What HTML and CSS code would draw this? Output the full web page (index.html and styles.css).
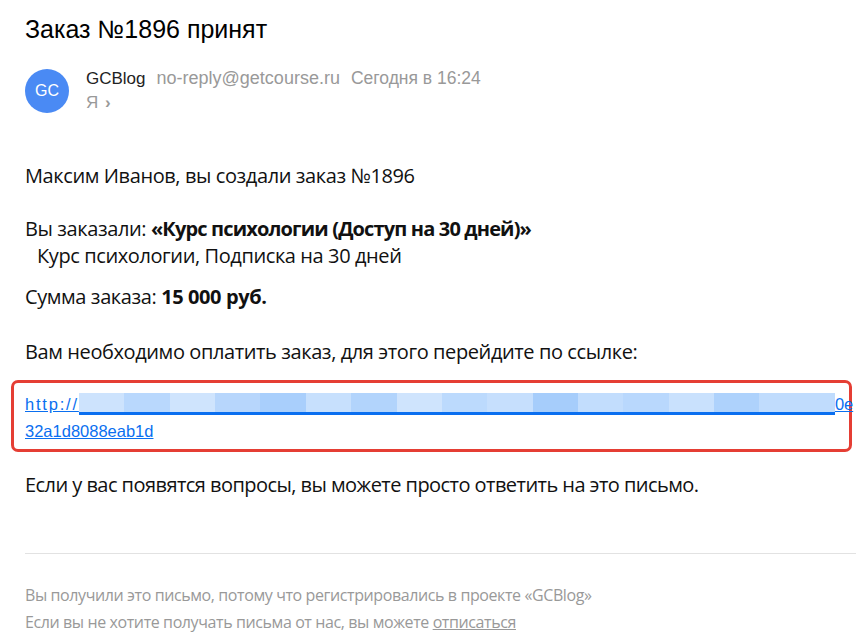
FILE: index.html
```html
<!DOCTYPE html>
<html lang="ru">
  <head>
    <meta charset="UTF-8" />
    <title>Заказ №1896 принят</title>
    <link rel="stylesheet" href="styles.css">
  </head>
  <body>
    <div class="mail">
      <h1 class="subject">Заказ №1896 принят</h1>

      <div class="sender">
        <div class="avatar">GC</div>
        <div class="sender-info">
          <div class="sender-line">
            <span class="sender-name">GCBlog</span>
            <span class="sender-mail">no-reply@getcourse.ru</span>
            <span class="sender-date">Сегодня в 16:24</span>
          </div>
          <div class="recipient">Я <span class="chevron">&#8250;</span></div>
        </div>
      </div>

      <div class="letter">
        <p>Максим Иванов, вы создали заказ №1896</p>

        <p class="order">Вы заказали: <b>«Курс психологии (Доступ на 30 дней)»</b></p>
        <p class="order-item">Курс психологии, Подписка на 30 дней</p>

        <p class="sum">Сумма заказа: <b>15 000 руб.</b></p>

        <p class="pay">Вам необходимо оплатить заказ, для этого перейдите по ссылке:</p>

        <!-- red frame marks the payment link -->
        <div class="highlight">
          <a class="pay-link" href="#"><span class="scheme">http://</span><span class="blurred"></span>0e<br>32a1d8088eab1d</a>
        </div>

        <p class="questions">Если у вас появятся вопросы, вы можете просто ответить на это письмо.</p>
      </div>

      <hr class="divider">

      <div class="footer">
        <p>Вы получили это письмо, потому что регистрировались в проекте «GCBlog»</p>
        <p>Если вы не хотите получать письма от нас, вы можете <a href="#">отписаться</a></p>
      </div>
    </div>
  </body>
</html>
```

FILE: styles.css
```css
body {
  margin: 0;
  background: #ffffff;
  font-family: "Liberation Sans", Arial, sans-serif;
  color: #000;
  overflow: hidden;
}

.mail {
  padding: 0 0 0 25px;
}

.subject {
  margin: 0;
  padding-top: 14px;
  font-size: 25px;
  font-weight: normal;
  line-height: 30px;
  color: #000;
}

/* sender block */
.sender {
  display: flex;
  align-items: center;
  margin-top: 22px;
}

.avatar {
  width: 44px;
  height: 44px;
  border-radius: 50%;
  background: #4a8af4;
  color: #fff;
  font-size: 16px;
  display: flex;
  align-items: center;
  justify-content: center;
  margin-right: 17px;
}

.sender-info {
  font-size: 18px;
  line-height: 24px;
}

.sender-name {
  font-size: 17px;
  color: #222;
  margin-right: 6px;
}

.sender-mail,
.sender-date {
  color: #999;
}

.sender-mail {
  margin-right: 6px;
}

.sender-date {
  font-size: 17.5px;
}

.recipient {
  color: #999;
  font-size: 17px;
}

.chevron {
  font-weight: bold;
  margin-left: 2px;
}

/* letter body */
.letter {
  font-family: "Open Sans", sans-serif;
  font-size: 20px;
  line-height: 27px;
  color: #111;
  margin-top: 47px;
  letter-spacing: -0.4px;
}

.letter p {
  margin: 0;
}

.letter b {
  font-weight: 700;
}

.order b {
  letter-spacing: -0.85px;
}

.order {
  margin-top: 26px !important;
}

.order-item {
  padding-left: 12px;
}

.sum {
  margin-top: 14px !important;
}

.pay {
  margin-top: 28px !important;
}

.highlight {
  margin: 15px 4px 0 -14px;
  padding: 8px 0 4px 11px;
  border: 3px solid #e53e34;
  border-radius: 7px;
  white-space: nowrap;
  font-family: "Liberation Sans", Arial, sans-serif;
  font-size: 16.5px;
  line-height: 27px;
  letter-spacing: 0;
}

.pay-link {
  color: #0a6ff0;
  text-decoration: underline;
}

.scheme {
  letter-spacing: 1.8px;
}

.blurred {
  display: inline-block;
  width: 756px;
  height: 19px;
  vertical-align: -5px;
  border-bottom: 3px solid #0a6ff0;
  background: linear-gradient(90deg,
    #cde3fd 0 6%, #b9d8fd 6% 12%, #cfe4fd 12% 18%, #b7d6fc 18% 24%,
    #a9cffc 24% 30%, #c7e0fd 30% 36%, #b2d4fc 36% 42%, #cfe4fd 42% 48%,
    #bcdafd 48% 54%, #c6dffd 54% 60%, #a6cdfb 60% 66%, #c2ddfd 66% 72%,
    #b9d8fd 72% 78%, #c9e1fd 78% 84%, #aed2fc 84% 90%, #c0dcfd 90% 100%);
}

.questions {
  margin-top: 19px !important;
  letter-spacing: -0.55px;
}

.divider {
  margin: 55px 0 0;
  border: 0;
  border-top: 1px solid #e2e2e2;
}

.footer {
  margin-top: 28px;
  font-family: "Open Sans", sans-serif;
  font-size: 16px;
  line-height: 27px;
  letter-spacing: -0.4px;
  color: #999;
}

.footer p {
  margin: 0;
}

.footer a {
  color: #999;
}
```
